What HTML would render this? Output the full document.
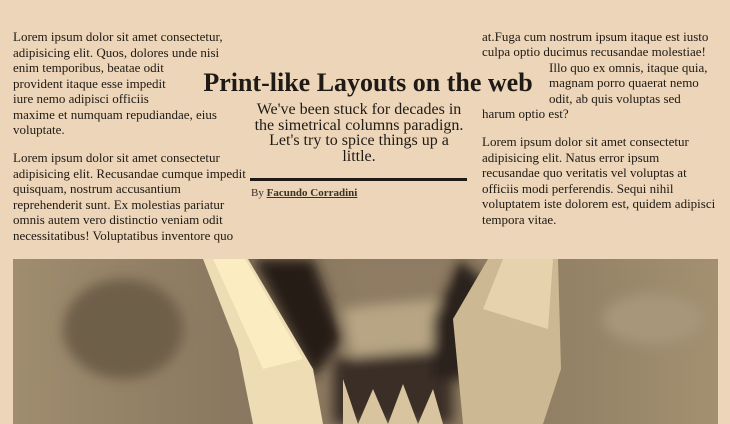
<!DOCTYPE html>
<html><head><meta charset="utf-8"><style>
html,body{margin:0;padding:0;}
body{width:730px;height:424px;background:#ecd5b8;position:relative;overflow:hidden;font-family:"Liberation Serif",serif;color:#1f1a15;}
.l{position:absolute;font-size:13px;line-height:16px;white-space:nowrap;}
h1{position:absolute;margin:0;left:0;width:736px;text-align:center;top:68px;font-size:26px;font-weight:bold;line-height:30px;white-space:nowrap;}
.sub{position:absolute;left:246px;width:226px;text-align:center;top:102px;font-size:16px;line-height:15.6px;}
.rule{position:absolute;left:250px;top:178px;width:217px;height:3px;background:#1f1a15;}
.by{position:absolute;left:251px;top:186px;font-size:11px;line-height:14px;color:#3a3128;}
.by b{text-decoration:underline;}
</style></head><body>
<div class="l" style="left:13px;top:29px">Lorem ipsum dolor sit amet consectetur,</div>
<div class="l" style="left:13px;top:45px">adipisicing elit. Quos, dolores unde nisi</div>
<div class="l" style="left:13px;top:60px">enim temporibus, beatae odit</div>
<div class="l" style="left:13px;top:76px">provident itaque esse impedit</div>
<div class="l" style="left:13px;top:91px">iure nemo adipisci officiis</div>
<div class="l" style="left:13px;top:107px">maxime et numquam repudiandae, eius</div>
<div class="l" style="left:13px;top:122px">voluptate.</div>
<div class="l" style="left:13px;top:150px">Lorem ipsum dolor sit amet consectetur</div>
<div class="l" style="left:13px;top:166px">adipisicing elit. Recusandae cumque impedit</div>
<div class="l" style="left:13px;top:181px">quisquam, nostrum accusantium</div>
<div class="l" style="left:13px;top:197px">reprehenderit sunt. Ex molestias pariatur</div>
<div class="l" style="left:13px;top:212px">omnis autem vero distinctio veniam odit</div>
<div class="l" style="left:13px;top:228px">necessitatibus! Voluptatibus inventore quo</div>

<h1>Print-like Layouts on the web</h1>
<div class="sub">We've been stuck for decades in<br>the simetrical columns paradign.<br>Let's try to spice things up a<br>little.</div>
<div class="rule"></div>
<div class="by">By <b>Facundo Corradini</b></div>

<div class="l" style="left:482px;top:29px">at.Fuga cum nostrum ipsum itaque est iusto</div>
<div class="l" style="left:482px;top:44px">culpa optio ducimus recusandae molestiae!</div>
<div class="l" style="left:549px;top:60px">Illo quo ex omnis, itaque quia,</div>
<div class="l" style="left:549px;top:75px">magnam porro quaerat nemo</div>
<div class="l" style="left:549px;top:91px">odit, ab quis voluptas sed</div>
<div class="l" style="left:482px;top:106px">harum optio est?</div>
<div class="l" style="left:482px;top:134px">Lorem ipsum dolor sit amet consectetur</div>
<div class="l" style="left:482px;top:150px">adipisicing elit. Natus error ipsum</div>
<div class="l" style="left:482px;top:165px">recusandae quo veritatis vel voluptas at</div>
<div class="l" style="left:482px;top:181px">officiis modi perferendis. Sequi nihil</div>
<div class="l" style="left:482px;top:196px">voluptatem iste dolorem est, quidem adipisci</div>
<div class="l" style="left:482px;top:212px">tempora vitae.</div>

<svg style="position:absolute;left:13px;top:259px" width="705" height="165" viewBox="0 0 705 165">
<defs>
<linearGradient id="bg" x1="0" x2="1"><stop offset="0" stop-color="#a08d6f"/><stop offset="0.3" stop-color="#8a7860"/><stop offset="0.7" stop-color="#8e7c62"/><stop offset="1" stop-color="#a39070"/></linearGradient>
<filter id="b"><feGaussianBlur stdDeviation="6"/></filter>
</defs>
<rect width="705" height="165" fill="url(#bg)"/>
<g filter="url(#b)">
<ellipse cx="110" cy="70" rx="60" ry="50" fill="#6e5e4a"/>
<ellipse cx="640" cy="60" rx="50" ry="25" fill="#a8967a"/>
<path d="M240 0 L330 0 L350 60 L430 30 L440 0 L330 0 Z" fill="#8f7c63"/>
<path d="M240 0 L300 0 L330 80 L300 120 Z" fill="#261d18"/>
<path d="M330 50 L430 40 L420 110 L340 110 Z" fill="#b8a584"/>
<path d="M320 100 L440 90 L440 165 L320 165 Z" fill="#3a2e25"/>
<path d="M420 60 L445 0 L470 20 L460 120 L420 120 Z" fill="#2a211b"/>
</g>
<path d="M190 0 L235 0 L300 110 L310 165 L240 165 L225 90 Z" fill="#eedcb4"/>
<path d="M200 0 L232 0 L290 100 L250 110 Z" fill="#fbecc2"/>
<path d="M475 0 L545 0 L548 110 L530 165 L450 165 L440 60 Z" fill="#cdb894"/>
<path d="M490 0 L540 0 L535 70 L470 50 Z" fill="#e6d3ad"/>
<path d="M330 120 L345 165 L360 130 L375 165 L390 125 L405 165 L420 130 L430 165 L330 165 Z" fill="#d8c49f"/>
</svg>
</body></html>
